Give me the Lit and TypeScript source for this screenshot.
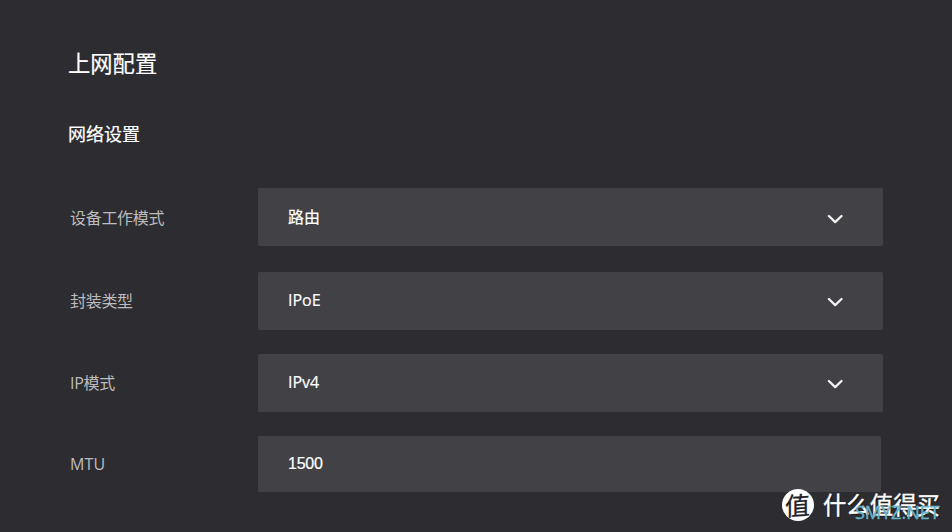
import { LitElement, html, css, nothing } from "lit";
import { customElement, property } from "lit/decorators.js";

@customElement("config-field")
class ConfigField extends LitElement {
  @property() label = "";
  @property() value = "";
  @property() kind = "select";

  static styles = css`
    :host { display: flex; align-items: flex-start; }
    .label {
      width: 188px; margin-left: 70px; flex: none; box-sizing: border-box;
      font-size: 16px; line-height: 24px; letter-spacing: -0.3px;
      color: #bcbcbe; padding-top: 17.2px; white-space: nowrap;
    }
    .label.input { padding-top: 16px; letter-spacing: 0.2px; }
    .box {
      width: 625px; height: 57.7px; box-sizing: border-box; border-radius: 2px;
      background: #424145; color: #fff; display: flex; justify-content: space-between;
      align-items: flex-start; padding: 16.3px 40px 0 30px;
      font-size: 16px; line-height: 24px;
    }
    .box.input {
      width: 623px; height: 56px; padding-top: 16px;
      font-family: "Liberation Sans", Arial, sans-serif;
    }
    .value { display: block; -webkit-text-stroke: 0.2px #fff; }
    .input .value { letter-spacing: -0.25px; }
    .chevron { width: 16px; height: 12px; margin-top: 8px; display: block; }
  `;

  render() {
    const input = this.kind === "input";
    return html`
      <div class="label ${input ? "input" : ""}">${this.label}</div>
      <div class="box ${input ? "input" : ""}">
        <span class="value">${this.value}</span>
        ${input
          ? nothing
          : html`<svg class="chevron" viewBox="0 0 16 12" fill="none" stroke="#f2f2f2"
              stroke-width="2.3" stroke-linecap="round" stroke-linejoin="round">
              <path d="M1.9 3 8.2 9.1 14.5 3" />
            </svg>`}
      </div>
    `;
  }
}

@customElement("app-root")
class AppRoot extends LitElement {
  static styles = css`
    :host {
      display: block; position: relative; width: 952px; height: 532px; overflow: hidden;
      background: #2d2c31; color: #fff;
      font-family: "Open Sans", "Noto Sans CJK SC", sans-serif;
    }
    h1, h2 {
      margin: 0; font-weight: 400; font-family: "Noto Sans CJK SC", sans-serif;
      -webkit-text-stroke: 0.2px #fff;
    }
    h1 { padding: 46px 0 0 68px; font-size: 22.3px; line-height: 32px; }
    h2 { padding: 43px 0 0 68px; font-size: 18px; line-height: 24px; }
    .form { display: grid; grid-template-rows: 83.6px 82px 81.6px 56px; padding-top: 43.4px; }
    .brand {
      position: absolute; left: 782px; top: 489px; display: flex; align-items: center; gap: 9px;
      font-family: "Noto Sans CJK SC", sans-serif;
    }
    .seal {
      width: 32px; height: 32px; border-radius: 50%; background: #fff; color: #222126;
      display: flex; align-items: center; justify-content: center;
      font-size: 25px; line-height: 32px; font-weight: 400;
    }
    .glyph { transform: translateY(-1px) rotate(-4deg) skewX(-4deg); -webkit-text-stroke: 0.3px #222126; }
    .name {
      font-size: 23.4px; line-height: 32px; font-weight: 400; white-space: nowrap;
      margin-top: -2px; text-shadow: 1px 1px 1px #17171a; -webkit-text-stroke: 0.4px #fff;
    }
    .site {
      position: absolute; left: 855px; top: 500px; font-size: 18px; line-height: 24px;
      color: #65b3c7; font-family: "Open Sans", sans-serif; white-space: nowrap;
      -webkit-text-stroke: 0.4px #65b3c7;
    }
  `;

  render() {
    return html`
      <h1>上网配置</h1>
      <h2>网络设置</h2>
      <div class="form">
        <config-field label="设备工作模式" value="路由"></config-field>
        <config-field label="封装类型" value="IPoE"></config-field>
        <config-field label="IP模式" value="IPv4"></config-field>
        <config-field label="MTU" value="1500" kind="input"></config-field>
      </div>
      <div class="brand">
        <div class="seal"><span class="glyph">值</span></div>
        <div class="name">什么值得买</div>
      </div>
      <div class="site">SMYZ.NET</div>
    `;
  }
}
